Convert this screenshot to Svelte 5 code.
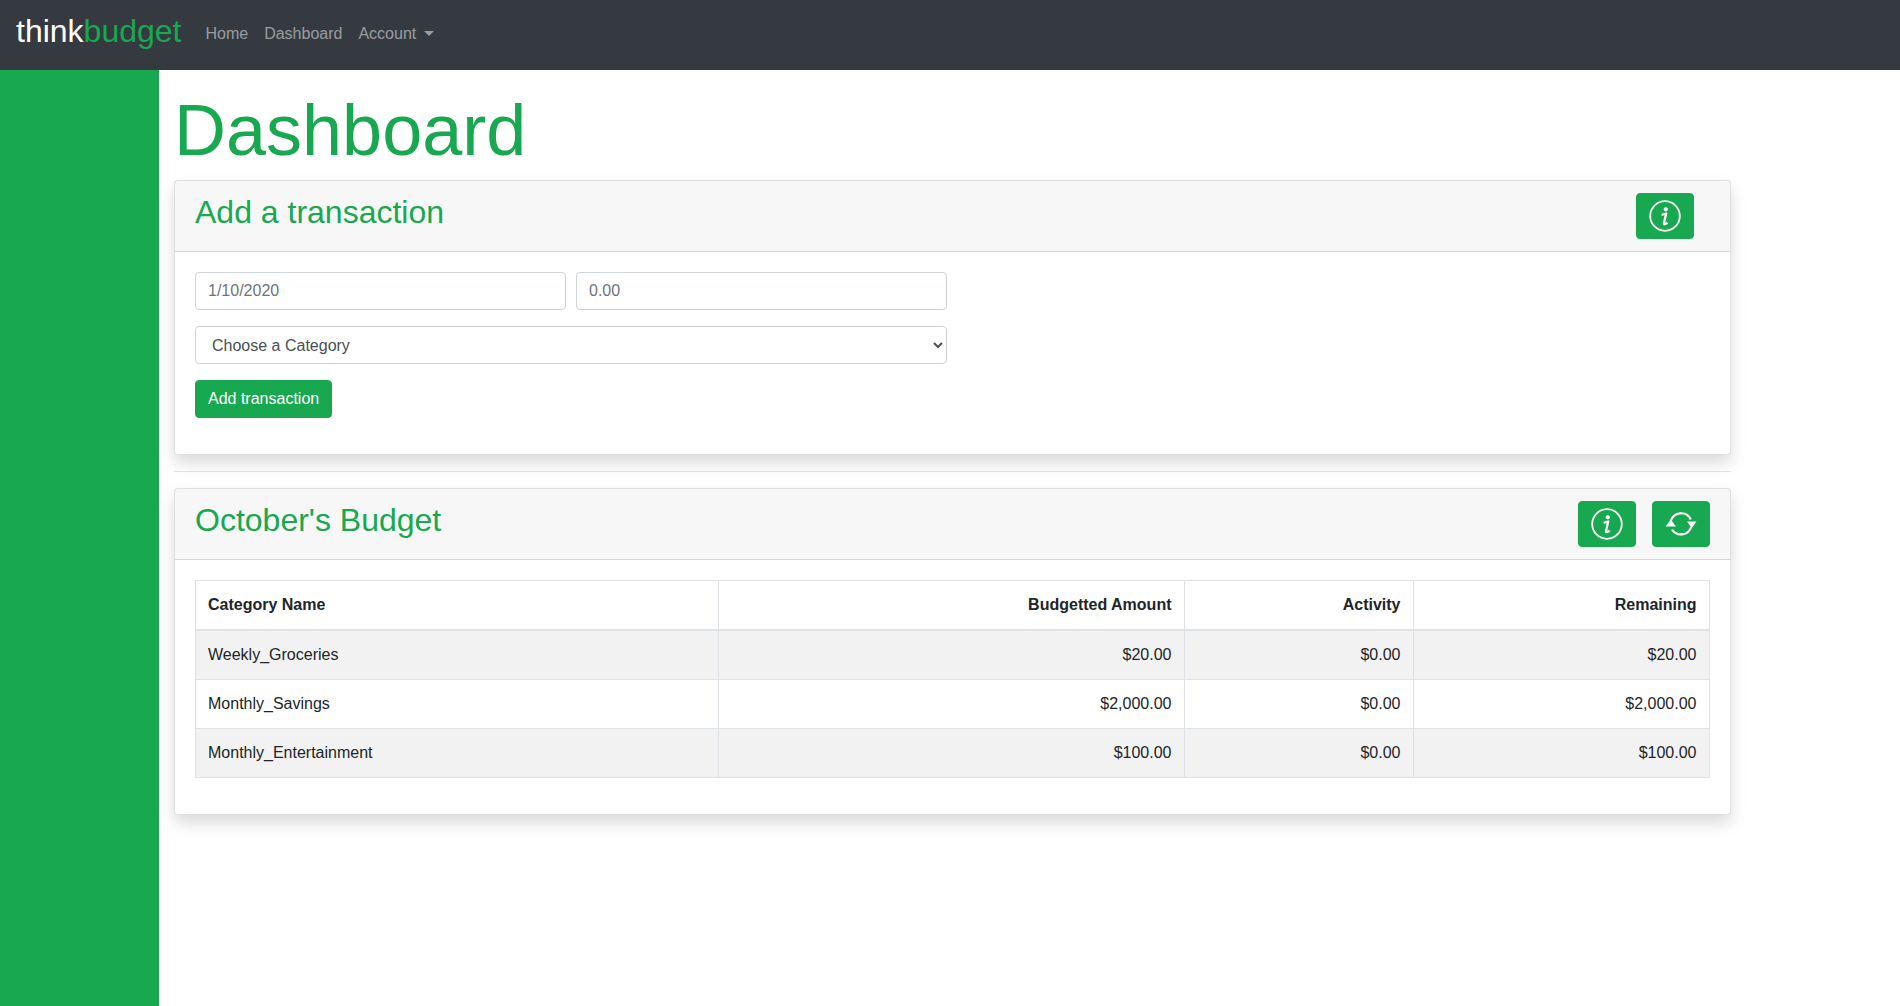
<script lang="ts">
	const rows = [
		{ name: 'Weekly_Groceries', budget: '$20.00', activity: '$0.00', left: '$20.00' },
		{ name: 'Monthly_Savings', budget: '$2,000.00', activity: '$0.00', left: '$2,000.00' },
		{ name: 'Monthly_Entertainment', budget: '$100.00', activity: '$0.00', left: '$100.00' }
	];
</script>

{#snippet infoIcon()}
	<svg width="32" height="32" viewBox="0 0 32 32" fill="none" aria-hidden="true">
		<circle cx="16" cy="16" r="14.8" stroke="#fff" stroke-width="1.8" />
		<circle cx="16.8" cy="9.3" r="2.1" fill="#fff" />
		<path d="M12.6 14.8l4.6-1.3-2.2 9.4c-.4 1.8 1.2 1.7 3.6-.2" stroke="#fff" stroke-width="2.3" stroke-linejoin="round" />
	</svg>
{/snippet}

{#snippet refreshIcon()}
	<svg width="32" height="32" viewBox="0 0 32 32" fill="none" aria-hidden="true">
		<path d="M5.8 13A10.7 10.7 0 0 1 25.8 11.5M26.2 19A10.7 10.7 0 0 1 7 21.5" stroke="#fff" stroke-width="2.2" />
		<path d="M0.6 18.6L5.8 11.6 11 18.6zM22 13.4L31.4 13.4 26.7 20.2z" fill="#fff" />
	</svg>
{/snippet}

<nav class="navbar">
	<a class="brand" href="#top">think<span>budget</span></a>
	<ul class="nav-links">
		<li><a href="#top">Home</a></li>
		<li><a href="#top">Dashboard</a></li>
		<li><a href="#top" class="dropdown">Account</a></li>
	</ul>
</nav>

<div class="layout">
	<aside class="sidebar"></aside>
	<main class="content">
		<h1>Dashboard</h1>

		<section class="card">
			<header class="card-header">
				<h2>Add a transaction</h2>
				<div class="actions actions--inset">
					<button class="btn" aria-label="Info">{@render infoIcon()}</button>
				</div>
			</header>
			<div class="card-body">
				<form>
					<div class="form-row">
						<input class="form-control" type="text" placeholder="1/10/2020" />
						<input class="form-control" type="text" placeholder="0.00" />
					</div>
					<div class="form-group">
						<select class="form-control">
							<option>Choose a Category</option>
						</select>
					</div>
					<button class="btn btn--text" type="button">Add transaction</button>
				</form>
			</div>
		</section>

		<hr />

		<section class="card">
			<header class="card-header">
				<h2>October's Budget</h2>
				<div class="actions">
					<button class="btn" aria-label="Info">{@render infoIcon()}</button>
					<button class="btn" aria-label="Refresh">{@render refreshIcon()}</button>
				</div>
			</header>
			<div class="card-body">
				<table>
					<colgroup>
						<col class="col-name" />
						<col class="col-budget" />
						<col class="col-activity" />
						<col />
					</colgroup>
					<thead>
						<tr>
							<th>Category Name</th>
							<th class="num">Budgetted Amount</th>
							<th class="num">Activity</th>
							<th class="num">Remaining</th>
						</tr>
					</thead>
					<tbody>
						{#each rows as row}
							<tr>
								<td>{row.name}</td>
								<td class="num">{row.budget}</td>
								<td class="num">{row.activity}</td>
								<td class="num">{row.left}</td>
							</tr>
						{/each}
					</tbody>
				</table>
			</div>
		</section>
	</main>
</div>

<style>
	:global(body) {
		font-family: 'Liberation Sans', Arial, sans-serif;
		font-size: 16px;
		line-height: 1.5;
		color: #212529;
		background: #fff;
	}

	* {
		box-sizing: border-box;
	}

	.navbar {
		display: flex;
		align-items: center;
		height: 70px;
		padding: 0 16px 8px;
		background: #343a40;
	}

	.brand {
		margin-right: 16px;
		font-size: 32px;
		line-height: 48px;
		color: #fff;
		text-decoration: none;
	}

	.brand span {
		color: #18a84f;
	}

	.nav-links {
		display: flex;
		margin: 5px 0 0;
		padding: 0;
		list-style: none;
	}

	.nav-links a {
		display: block;
		padding: 8px;
		color: rgba(255, 255, 255, 0.5);
		text-decoration: none;
	}

	.dropdown::after {
		content: '';
		display: inline-block;
		margin-left: 8px;
		vertical-align: 3px;
		border-top: 5px solid;
		border-right: 5px solid transparent;
		border-left: 5px solid transparent;
	}

	.layout {
		display: flex;
		min-height: 936px;
	}

	.sidebar {
		flex: 0 0 159px;
		background: #18a84f;
	}

	.content {
		width: 1571.5px;
		padding: 17px 0 0 15px;
	}

	h1 {
		margin: 0 0 7px;
		font-size: 72px;
		font-weight: 400;
		line-height: 1.2;
		color: #18a84f;
	}

	.card {
		background: #fff;
		border: 1px solid rgba(0, 0, 0, 0.125);
		border-radius: 4px;
		box-shadow: 0 8px 16px rgba(0, 0, 0, 0.15);
	}

	.card-header {
		display: flex;
		justify-content: space-between;
		align-items: flex-start;
		padding: 12px 20px 11.6px;
		background: rgba(0, 0, 0, 0.03);
		border-bottom: 1px solid rgba(0, 0, 0, 0.125);
	}

	h2 {
		margin: 0 0 8px;
		font-size: 32px;
		font-weight: 400;
		line-height: 1.2;
		color: #18a84f;
	}

	.actions {
		display: flex;
		gap: 16px;
	}

	.actions--inset {
		margin-right: 16px;
	}

	.btn {
		display: block;
		padding: 6px 12px;
		font: inherit;
		color: #fff;
		background: #18a84f;
		border: 1px solid #18a84f;
		border-radius: 4px;
	}

	.btn svg {
		display: block;
	}

	.card-body {
		padding: 20px;
	}

	form {
		width: 752px;
		margin-bottom: 15.6px;
	}

	.form-row {
		display: flex;
		gap: 10px;
		margin-bottom: 16px;
	}

	.form-group {
		margin-bottom: 16px;
	}

	.form-control {
		display: block;
		width: 100%;
		min-width: 0;
		height: 38px;
		padding: 6px 12px;
		font: inherit;
		color: #495057;
		background: #fff;
		border: 1px solid #ced4da;
		border-radius: 4px;
	}

	.form-control::placeholder {
		color: #6c757d;
	}

	table {
		width: 100%;
		margin-bottom: 16px;
		border-collapse: collapse;
		table-layout: fixed;
	}

	.col-name {
		width: 522.5px;
	}

	.col-budget {
		width: 466px;
	}

	.col-activity {
		width: 229px;
	}

	th,
	td {
		padding: 12px;
		text-align: left;
		vertical-align: top;
		border: 1px solid #dee2e6;
	}

	thead th {
		border-bottom-width: 2px;
		vertical-align: bottom;
	}

	tbody tr:nth-child(odd) {
		background: rgba(0, 0, 0, 0.05);
	}

	.num {
		text-align: right;
	}

	hr {
		margin: 16px 0;
		border: 0;
		border-top: 1px solid rgba(0, 0, 0, 0.1);
	}
</style>
